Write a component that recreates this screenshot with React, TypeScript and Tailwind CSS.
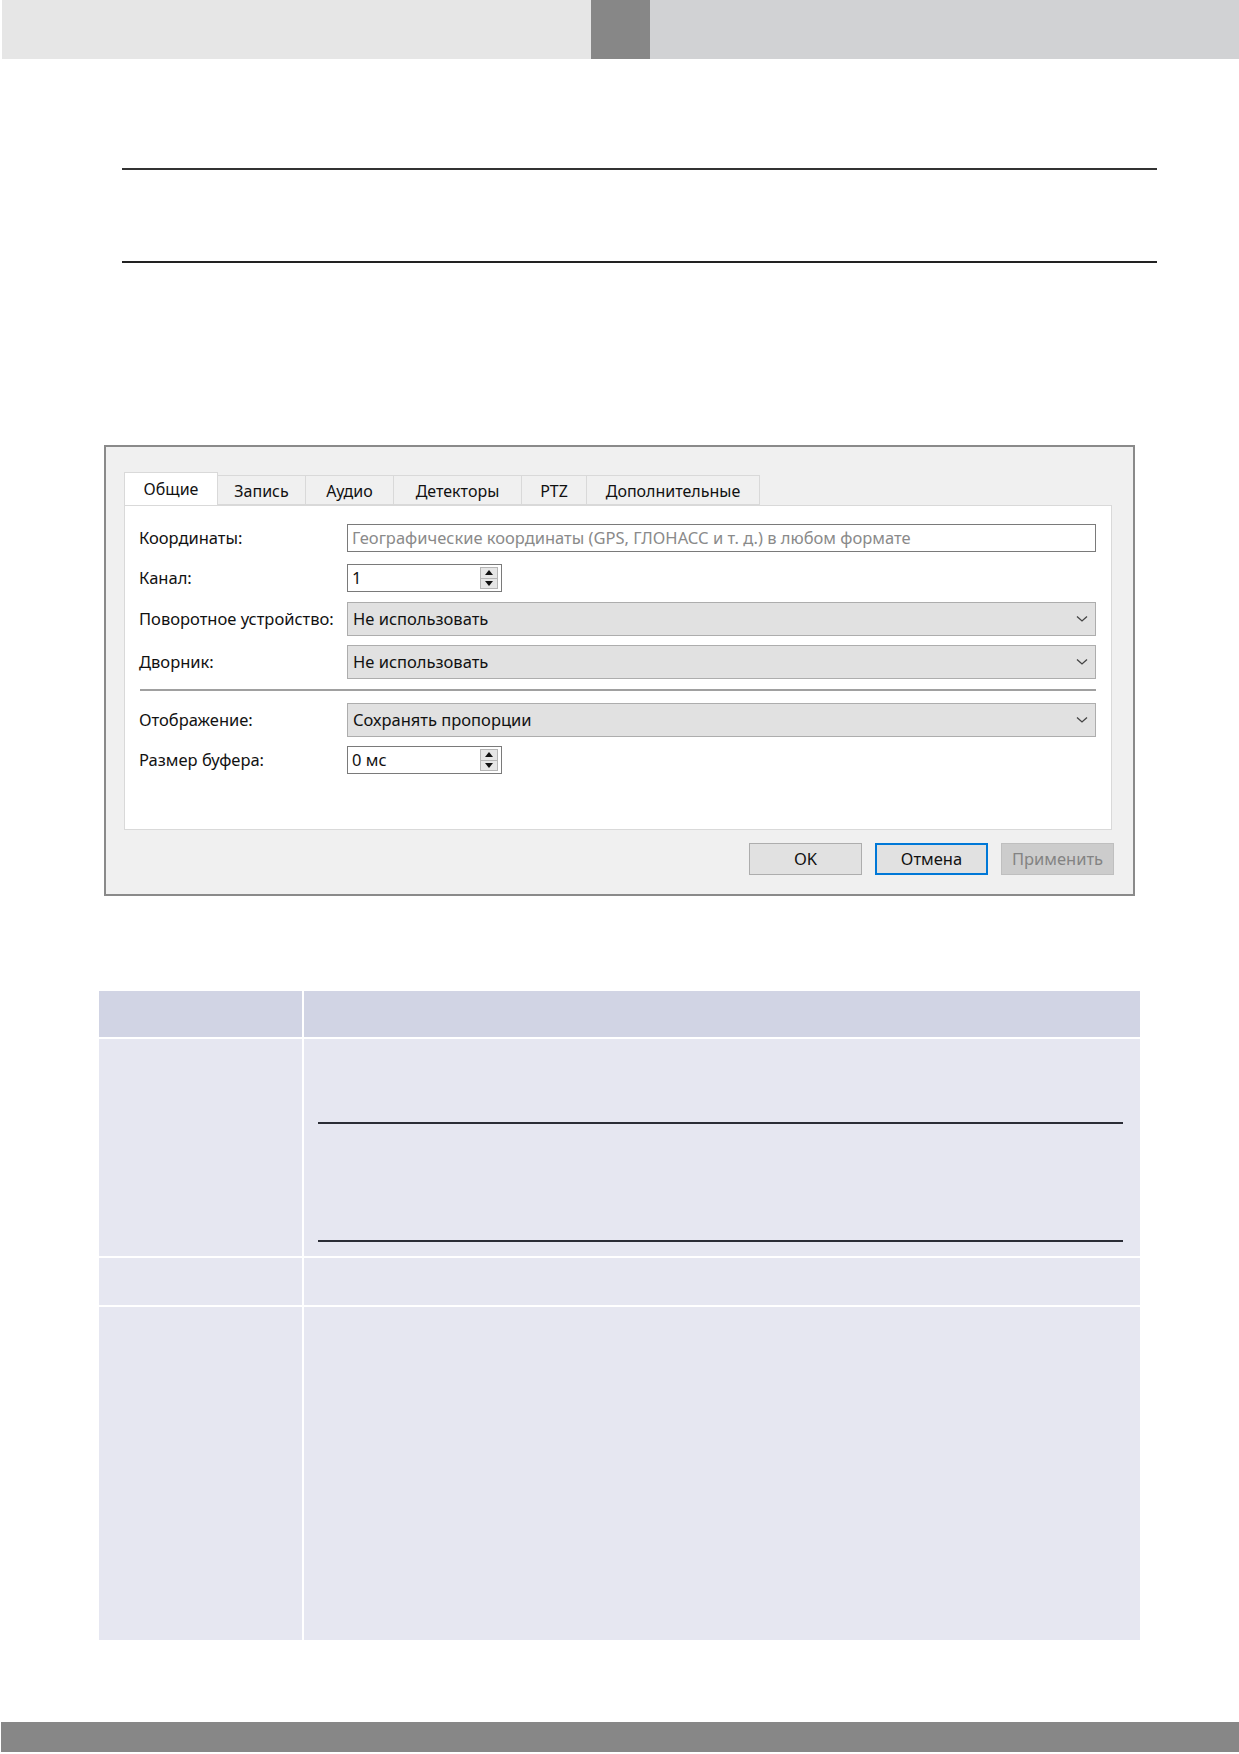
const ui = "font-['Noto_Sans','Open_Sans',sans-serif]";

const tabs = ["Общие", "Запись", "Аудио", "Детекторы", "PTZ", "Дополнительные"];
const tabWidths = ["w-[94px]", "w-[88px]", "w-[88px]", "w-[128px]", "w-[65px]", "w-[173px]"];

function Chevron() {
  return (
    <svg width="12" height="8" viewBox="0 0 12 8" className="shrink-0">
      <path d="M1 1.5 L6 6 L11 1.5" fill="none" stroke="#444" strokeWidth="1.3" />
    </svg>
  );
}

function Combo({ value }: { value: string }) {
  return (
    <div className="flex h-[34px] flex-1 items-center justify-between border border-[#adadad] bg-[#e1e1e1] pl-[5px] pr-[7px] text-[16.5px] text-[#111]">
      <span>{value}</span>
      <Chevron />
    </div>
  );
}

function Spin({ value }: { value: string }) {
  return (
    <div className="flex h-[28px] w-[155px] items-stretch border border-[#7a7a7a] bg-white text-[16.5px] text-[#111]">
      <span className="flex flex-1 items-center pl-[4px]">{value}</span>
      <div className="my-[2px] mr-[3px] flex w-[18px] flex-col border border-[#b5b5b5] bg-[#e6e6e6]">
        <div className="flex flex-1 items-center justify-center border-b border-[#b5b5b5]">
          <svg width="8" height="5" viewBox="0 0 8 5"><path d="M0 5 L4 0 L8 5 Z" fill="#111" /></svg>
        </div>
        <div className="flex flex-1 items-center justify-center">
          <svg width="8" height="5" viewBox="0 0 8 5"><path d="M0 0 L4 5 L8 0 Z" fill="#111" /></svg>
        </div>
      </div>
    </div>
  );
}

function Row({ label, children, className = "" }: { label: string; children: React.ReactNode; className?: string }) {
  return (
    <div className={`flex items-center ${className}`}>
      <span className="w-[208px] shrink-0 text-[16.5px] text-[#111]">{label}</span>
      {children}
    </div>
  );
}

function Dialog() {
  return (
    <div className={`mx-[104px] h-[451px] border-2 border-[#8a8a8a] bg-[#f0f0f0] pl-[18px] pr-[21px] pt-[26px] ${ui}`}>
      {/* tab strip */}
      <div className="relative z-10 flex h-[32px] items-end">
        {tabs.map((t, i) =>
          i === 0 ? (
            <div key={t} className={`${tabWidths[i]} flex h-[33px] items-center justify-center border border-b-0 border-[#d9d9d9] bg-white pb-[1px] text-[16px] text-[#111]`}>
              {t}
            </div>
          ) : (
            <div key={t} className={`${tabWidths[i]} flex h-[30px] items-center justify-center border border-l-0 border-[#d9d9d9] bg-[#f0f0f0] pt-[1px] text-[16px] text-[#111]`}>
              {t}
            </div>
          )
        )}
      </div>

      {/* page body */}
      <div className="h-[325px] border border-[#d9d9d9] bg-white pl-[14px] pr-[15px] pt-[18px]">
        <Row label="Координаты:">
          <div className="flex h-[28px] flex-1 items-center border border-[#7a7a7a] bg-white pl-[4px] text-[16.5px] text-[#8a8a8a]">
            Географические координаты (GPS, ГЛОНАСС и т. д.) в любом формате
          </div>
        </Row>
        <Row label="Канал:" className="mt-[12px]">
          <Spin value="1" />
        </Row>
        <Row label="Поворотное устройство:" className="mt-[10px]">
          <Combo value="Не использовать" />
        </Row>
        <Row label="Дворник:" className="mt-[9px]">
          <Combo value="Не использовать" />
        </Row>
        <div className="ml-px mt-[10px] h-[2px] bg-[#a0a0a0]" />
        <Row label="Отображение:" className="mt-[12px]">
          <Combo value="Сохранять пропорции" />
        </Row>
        <Row label="Размер буфера:" className="mt-[9px]">
          <Spin value="0 мс" />
        </Row>
      </div>

      {/* buttons */}
      <div className="mr-[-2px] mt-[13px] flex justify-end gap-[13px] text-[16.5px]">
        <div className="flex h-[32px] w-[113px] items-center justify-center border border-[#adadad] bg-[#e1e1e1] text-[#111]">OK</div>
        <div className="flex h-[32px] w-[113px] items-center justify-center border-2 border-[#0078d7] bg-[#e1e1e1] text-[#111]">Отмена</div>
        <div className="flex h-[32px] w-[113px] items-center justify-center border border-[#bfbfbf] bg-[#cccccc] text-[#838383]">Применить</div>
      </div>
    </div>
  );
}

function Table() {
  const head = "bg-[#d1d4e4]";
  const cell = "bg-[#e6e7f1]";
  return (
    <div className="mx-[99px] grid grid-cols-[203px_1fr] gap-[2px] bg-white">
      <div className={`${head} h-[46px]`} />
      <div className={`${head} h-[46px]`} />

      <div className={`${cell} h-[217px]`} />
      <div className={`${cell} flex h-[217px] flex-col pl-[14px] pr-[17px] pt-[83px]`}>
        <div className="h-[2px] bg-[#2b2d36]" />
        <div className="mt-[116px] h-[2px] bg-[#2b2d36]" />
      </div>

      <div className={`${cell} h-[47px]`} />
      <div className={`${cell} h-[47px]`} />

      <div className={`${cell} h-[333px]`} />
      <div className={`${cell} h-[333px]`} />
    </div>
  );
}

export default function App() {
  return (
    <div className="relative h-[1754px] w-[1239px] overflow-hidden bg-white">
      {/* page header band */}
      <div className="flex h-[59px] pl-[2px]">
        <div className="w-[589px] bg-[#e6e6e6]" />
        <div className="w-[59px] bg-[#878787]" />
        <div className="flex-1 bg-[#d1d2d4]" />
      </div>

      <div className="ml-[122px] mr-[82px] mt-[109px] h-[2px] bg-[#333]" />
      <div className="ml-[122px] mr-[82px] mt-[91px] h-[2px] bg-[#222]" />

      <div className="mt-[182px]">
        <Dialog />
      </div>

      <div className="mt-[95px]">
        <Table />
      </div>

      {/* page footer band */}
      <div className="mt-[82px] ml-[1px] h-[30px] bg-[#878787]" />
    </div>
  );
}
